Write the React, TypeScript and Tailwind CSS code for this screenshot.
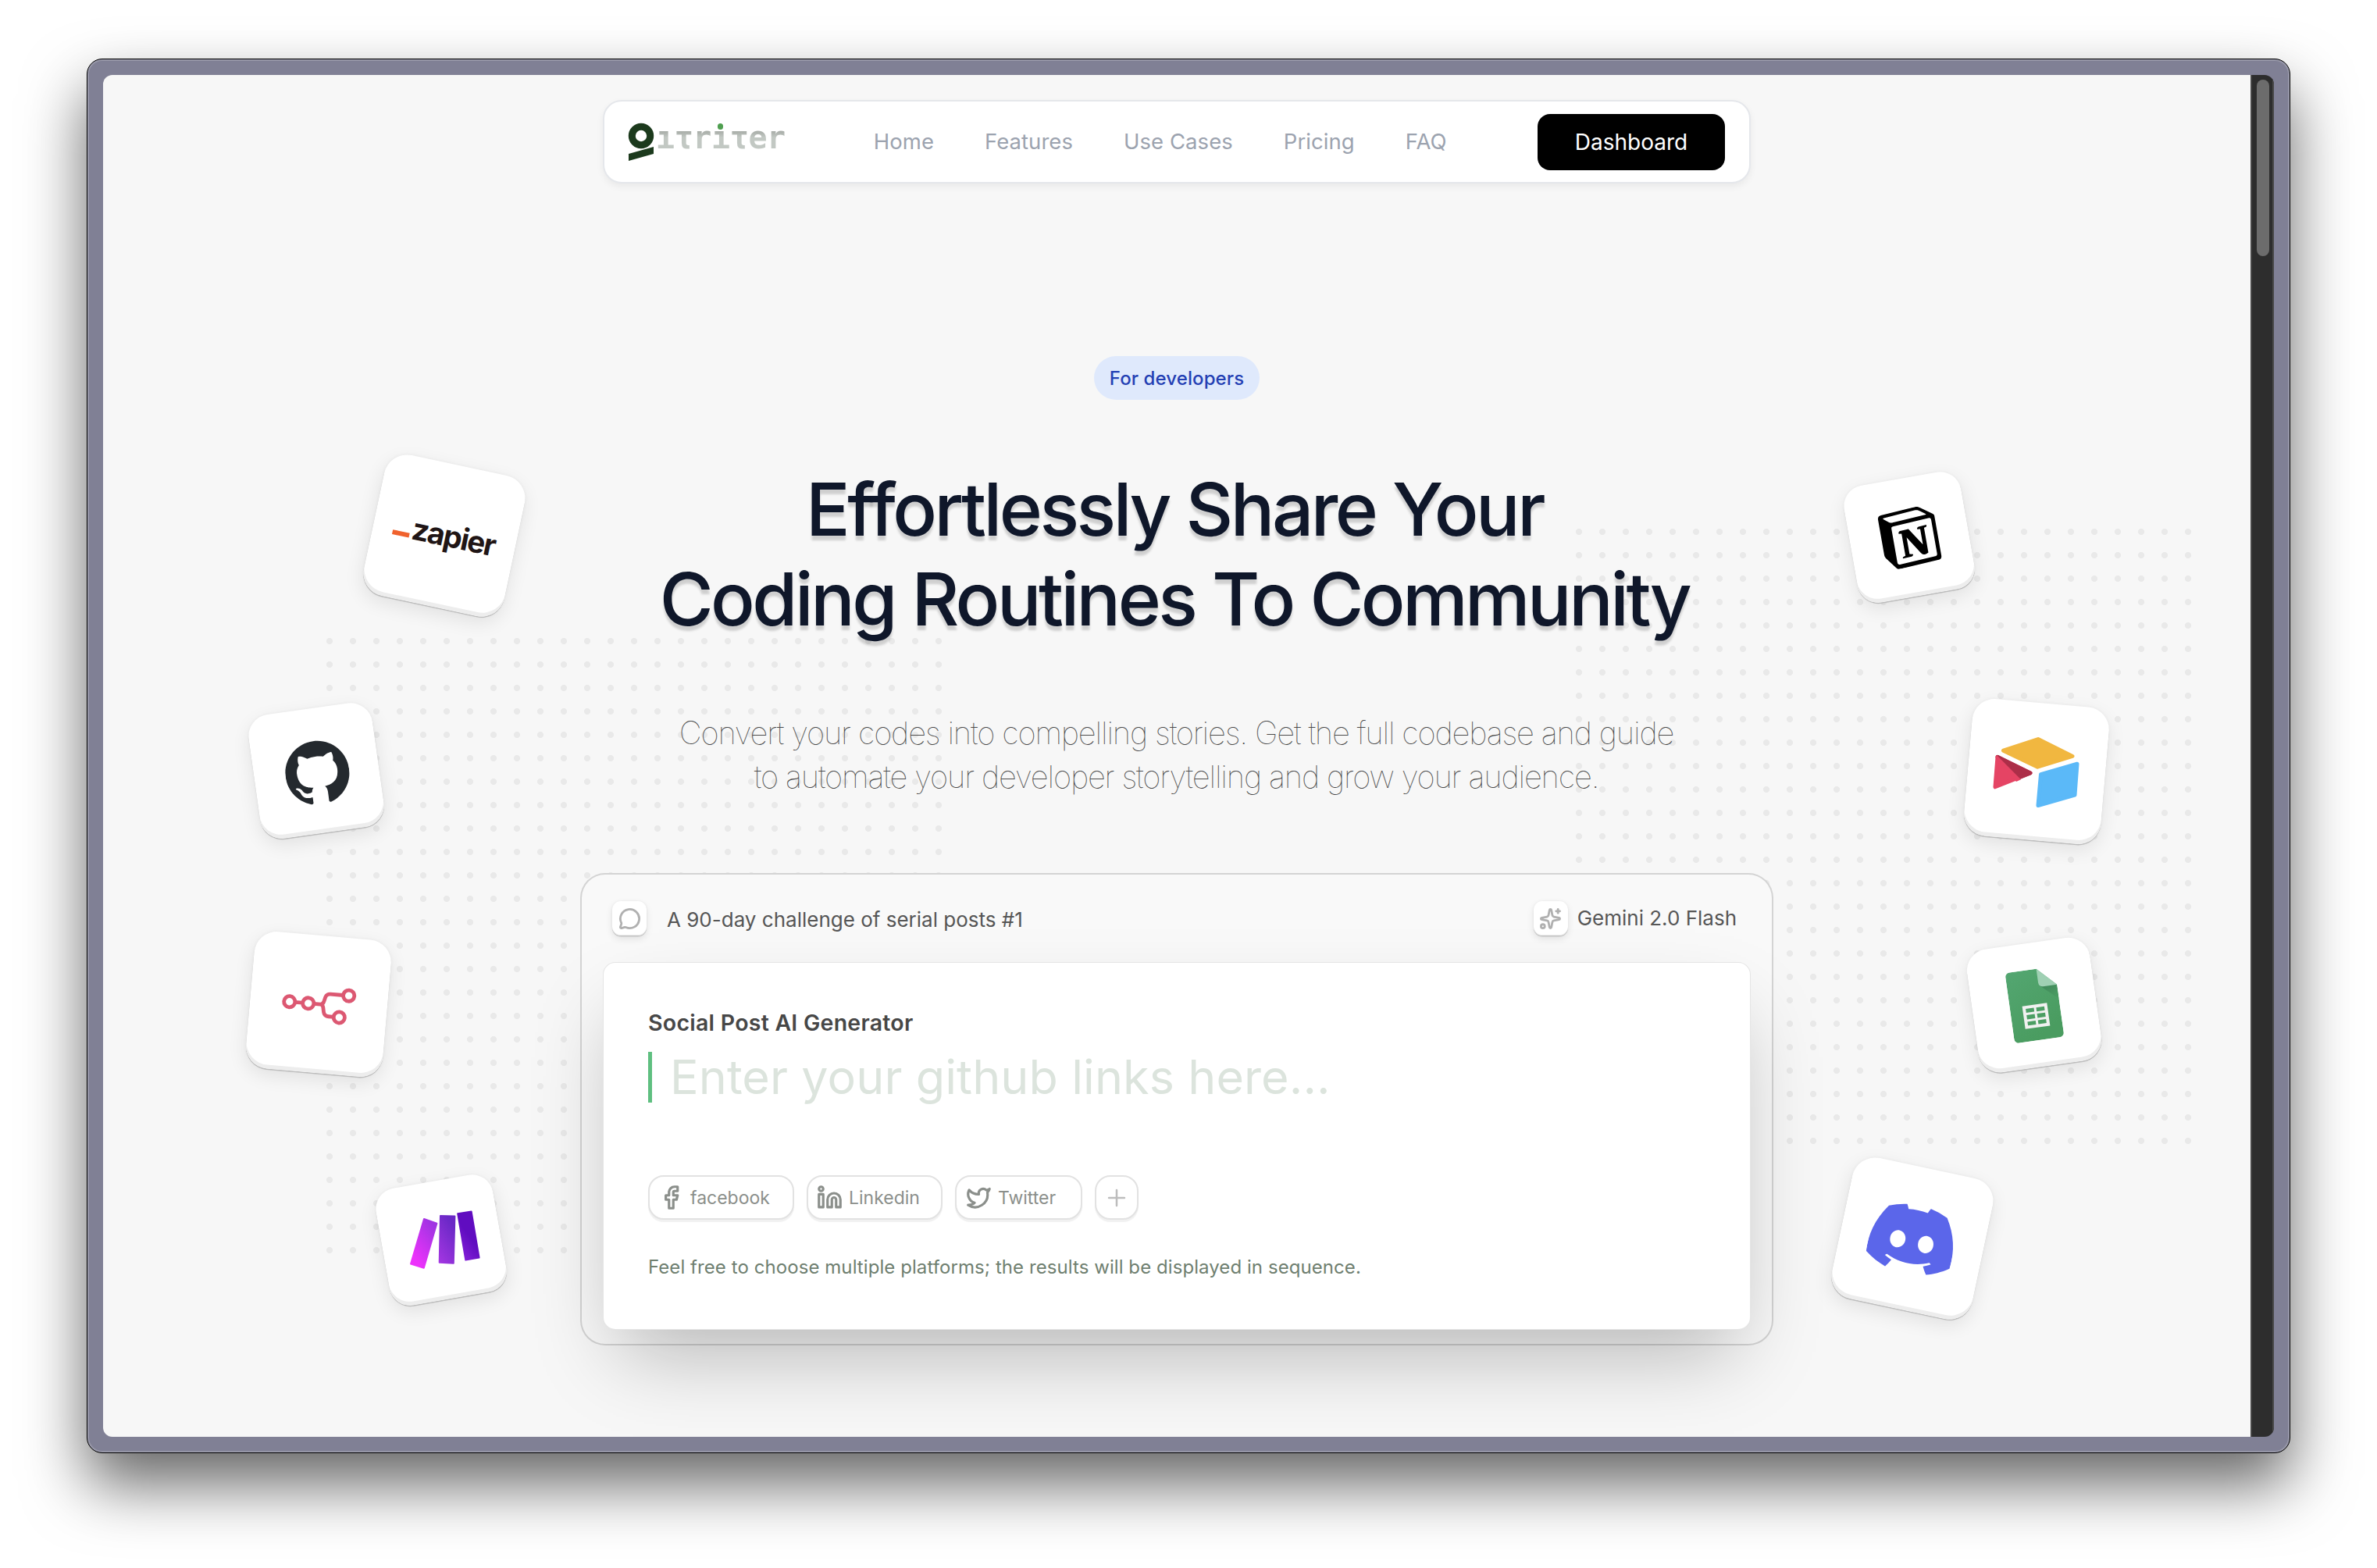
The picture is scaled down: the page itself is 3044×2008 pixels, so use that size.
import type { ReactNode } from "react";
import { Facebook, Linkedin, MessageCircle, Plus, Sparkles, Twitter } from "lucide-react";
import { SiDiscord, SiGithub, SiNotion } from "react-icons/si";

function Logo() {
  return (
    <div className="flex h-[50px] items-start">
      <svg width="34" height="50" viewBox="0 0 34 50" className="shrink-0">
        <circle cx="17" cy="17" r="11.7" fill="none" stroke="#1c3a1d" strokeWidth="9" />
        <path d="M1 40 L33 31 V40 L1 49 Z" fill="#1c3a1d" />
      </svg>
      <div className="relative ml-[2px] h-[50px]">
        <span className="block bg-linear-to-b from-[#a9aea9] from-30% to-[#c2c8c3] to-50% bg-clip-text font-['DejaVu_Sans_Mono'] text-[40px] leading-[38px] font-bold tracking-[-0.4px] text-transparent">
          ıτrıτer
        </span>
        <span className="absolute top-[1px] left-[79px] h-[8px] w-[7px] rounded-full bg-[#4f9f50]" />
      </div>
    </div>
  );
}

const links = ["Home", "Features", "Use Cases", "Pricing", "FAQ"];

function Nav() {
  return (
    <nav className="mt-8 flex h-[107px] w-[1470px] items-center rounded-[24px] border-2 border-[#e5e7eb] bg-white pr-[31px] pl-[30px] shadow-[0_4px_10px_rgba(0,0,0,0.06)]">
      <Logo />
      <div className="ml-[113px] flex flex-1 gap-[65px] pt-px text-[27.500px] tracking-[0.05px] text-[#9ca3af]">
        {links.map((l) => (
          <span key={l}>{l}</span>
        ))}
      </div>
      <button className="h-[72px] w-[240px] rounded-[16px] bg-black pt-px text-[28px] text-white">Dashboard</button>
    </nav>
  );
}

function Dots({ className }: { className: string }) {
  return (
    <div
      className={`absolute size-[810px] bg-[radial-gradient(circle_at_center,#e9e9e9_3.7px,transparent_4.4px)] bg-[length:30px_30px] ${className}`}
    />
  );
}

function Tile({ className, children }: { className: string; children: ReactNode }) {
  return (
    <div
      className={`absolute flex -translate-x-1/2 -translate-y-1/2 items-center justify-center bg-white shadow-[inset_0_-5px_0_#ededed,0_1.5px_0_#bcbcbc,0_0_4px_rgba(0,0,0,0.05),0_8px_24px_rgba(0,0,0,0.09)] ${className}`}
    >
      {children}
    </div>
  );
}

function N8nMark() {
  return (
    <svg width="100" height="50" viewBox="-50 -25 100 50" fill="none" stroke="#dc5872" strokeWidth="4.8">
      <circle cx="-37.4" cy="0" r="7.1" />
      <circle cx="-13.3" cy="0" r="7.1" />
      <circle cx="37.6" cy="-14.2" r="7.1" />
      <circle cx="27.7" cy="14.6" r="7.1" />
      <path d="M-30.5 0H-20.5M-6.5 0H2C10 0 4 -14.2 14 -14.2H30.5M2 0C10 0 3 14.6 14 14.6H20.5" />
    </svg>
  );
}

function MakeMark() {
  return (
    <svg width="120" height="100" viewBox="-60 -50 120 100" className="rotate-[10deg]">
      <defs>
        <linearGradient id="mk1" x1="0" y1="1" x2="0.7" y2="0">
          <stop offset="0.2" stopColor="#ec32fb" />
          <stop offset="1" stopColor="#9f34e2" />
        </linearGradient>
        <linearGradient id="mk2" x1="0" y1="1" x2="0.5" y2="0">
          <stop offset="0" stopColor="#a436e2" />
          <stop offset="1" stopColor="#6a28c6" />
        </linearGradient>
        <linearGradient id="mk3" x1="0" y1="1" x2="0.6" y2="0">
          <stop offset="0" stopColor="#8d24de" />
          <stop offset="0.6" stopColor="#600cc0" />
        </linearGradient>
      </defs>
      <g strokeWidth="2" strokeLinejoin="round">
        <path d="M-22 -27 L-5.6 -21.2 L-22.2 35.7 L-39 30.5 Z" fill="url(#mk1)" stroke="url(#mk1)" />
        <path d="M-1 -31 L17.4 -30.4 L15.8 29.7 L-2.3 28.8 Z" fill="url(#mk2)" stroke="url(#mk2)" />
        <path d="M21.2 -33.8 L38.6 -36.6 L48.6 22.6 L31.3 25.5 Z" fill="url(#mk3)" stroke="url(#mk3)" />
      </g>
    </svg>
  );
}

function AirtableMark() {
  return (
    <svg width="120" height="100" viewBox="-60 -50 120 100" className="-rotate-[5deg]" strokeLinejoin="round">
      <path d="M2 -41.5 L46 -19.6 L1.3 -5.8 L-42.5 -26.8 Z" fill="#f1b740" stroke="#f1b740" strokeWidth="5" />
      <path d="M5.5 3.6 L52 -9.8 L49 30 L2 43.5 Z" fill="#5bb9f8" stroke="#5bb9f8" strokeWidth="5" />
      <path d="M-50 -18.5 L-8 2 L-53 19.8 Z" fill="#e54464" stroke="#e54464" strokeWidth="5" />
      <path d="M-50 -18.8 L-8 2 L-21.6 7.4 Z" fill="#ac2e48" stroke="#ac2e48" strokeWidth="5" />
      <path d="M-52.5 -18 L-51 -21 L-20 10.2 L-26 13 Z" fill="#e54464" />
    </svg>
  );
}

function SheetsMark() {
  return (
    <svg width="64" height="91" viewBox="0 0 64 91">
      <defs>
        <linearGradient id="sh1" x1="0" y1="0" x2="0.4" y2="1">
          <stop offset="0" stopColor="#53a671" />
          <stop offset="1" stopColor="#4a9c60" />
        </linearGradient>
        <linearGradient id="sh2" x1="0" y1="0" x2="0.6" y2="1">
          <stop offset="0" stopColor="#3f8659" />
          <stop offset="1" stopColor="#4a9c62" />
        </linearGradient>
      </defs>
      <path d="M6 0H40.500L64 23.500V85a6 6 0 0 1-6 6H6a6 6 0 0 1-6-6V6a6 6 0 0 1 6-6Z" fill="url(#sh1)" />
      <path d="M42 22L64 42V23.500Z" fill="url(#sh2)" />
      <path d="M40.500 0L64 23.500H46a5.500 5.500 0 0 1-5.500-5.500Z" fill="#9fd0b3" />
      <path
        fillRule="evenodd"
        fill="#f1f1f1"
        d="M16 45H48V74.500H16ZM20 49V54H30.500V49ZM33.500 49V54H44V49ZM20 57V62.500H30.500V57ZM33.500 57V62.500H44V57ZM20 65.500V70.500H30.500V65.500ZM33.500 65.500V70.500H44V65.500Z"
      />
    </svg>
  );
}

function ZapierMark() {
  return (
    <div className="flex items-end gap-[2px] pb-[3px]">
      <span className="mb-[10px] h-[6px] w-[22px] bg-[#f0622d]" />
      <span className="text-[38.500px] leading-[46px] font-bold tracking-[-1.7px] text-[#201515]">zapier</span>
    </div>
  );
}

function MiniTile({ children }: { children: ReactNode }) {
  return (
    <span className="flex size-[44px] items-center justify-center rounded-[11px] bg-white text-[#b0b0b0] shadow-[inset_0_-1px_0_#ededed,0_1.5px_0_#c4c4c4,0_0_3px_rgba(0,0,0,0.06),0_4px_10px_rgba(0,0,0,0.1)]">
      {children}
    </span>
  );
}

function Chip({ icon, label, className }: { icon: ReactNode; label?: string; className: string }) {
  return (
    <span
      className={`flex h-[57px] items-center rounded-[20px] border-2 border-[#e2e2e2] bg-white text-[#8b8f8b] shadow-[0_3px_1px_#f1f1f1] ${className}`}
    >
      {icon}
      {label && <span className="ml-[8px] pt-px text-[23px]">{label}</span>}
    </span>
  );
}

function Generator() {
  return (
    <section className="relative mt-[95px] h-[605px] w-[1528px] rounded-[32px] border-2 border-black/15 bg-[#f9f9f9] px-[27px]">
      <header className="flex h-[112px] items-center justify-between px-3">
        <div className="flex items-center gap-[26px]">
          <MiniTile>
            <MessageCircle size={29} strokeWidth={2.3} />
          </MiniTile>
          <span className="pt-[2px] text-[26px] text-[#565656]">A 90-day challenge of serial posts #1</span>
        </div>
        <div className="flex items-center gap-3 pr-[6px]">
          <MiniTile>
            <Sparkles size={29} strokeWidth={2.3} />
          </MiniTile>
          <span className="pb-[2px] text-[26px] text-[#565656]">Gemini 2.0 Flash</span>
        </div>
      </header>
      <div className="h-[471px] rounded-[16px] border border-black/10 bg-white px-[57px] pt-[57px] shadow-[0_50px_100px_-22px_rgba(0,0,0,0.28)]">
        <h2 className="text-[28.500px] leading-[40px] font-semibold tracking-[0.25px] text-[#474747]">Social Post AI Generator</h2>
        <div className="mt-[17px] flex h-[65px] items-center">
          <span className="h-full w-[5px] bg-[#5fbf80]" />
          <span className="ml-[23px] text-[61px] leading-[65px] tracking-[0.1px] text-[#dce4dd]">
            Enter your github links here...
          </span>
        </div>
        <div className="mt-[93px] flex gap-4">
          <Chip className="w-[187px] pl-[11px]" icon={<Facebook size={33} strokeWidth={2.3} />} label="facebook" />
          <Chip className="w-[174px] pl-[11px]" icon={<Linkedin size={33} strokeWidth={2.3} />} label="Linkedin" />
          <Chip className="w-[163px] pl-[12px]" icon={<Twitter size={33} strokeWidth={2.3} />} label="Twitter" />
          <Chip className="w-[56px] justify-center" icon={<Plus size={34} strokeWidth={1.8} className="shrink-0 text-[#bdbdbd]" />} />
        </div>
        <p className="mt-[43px] text-[24px] leading-[36px] tracking-[0.07px] text-[#6f7f70]">
          Feel free to choose multiple platforms; the results will be displayed in sequence.
        </p>
      </div>
    </section>
  );
}

export default function App() {
  return (
    <div className="h-[2008px] w-[3044px] overflow-hidden bg-white pt-[75px] pl-[111px] font-[Inter,sans-serif]">
      <div className="h-[1786px] w-[2822px] rounded-[20px] border border-black bg-[#808095] p-[20px] shadow-[inset_0_0_0_2px_rgba(255,255,255,0.18),0_40px_80px_rgba(0,0,0,0.6)]">
        <div className="flex h-full overflow-hidden rounded-[12px]">
          <main className="relative flex w-[2750px] flex-col items-center overflow-hidden bg-[#f7f7f7]">
            <Dots className="top-[710px] left-[275px]" />
            <Dots className="top-[570px] left-[1875px]" />
            <Nav />
            <span className="mt-[221px] flex h-[56px] w-[212px] shrink-0 items-center justify-center rounded-full bg-[#dfe9fc] pt-px text-[24px] font-medium tracking-[0.1px] text-[#2440b4]">
              For developers
            </span>
            <h1 className="relative mt-[83px] pr-[6px] text-center text-[94px] leading-[115px] font-medium tracking-[-3.5px] text-[#0f172a] [text-shadow:0_6px_3px_rgba(0,0,0,0.16)]">
              Effortlessly Share Your
              <br />
              Coding Routines To Community
            </h1>
            <p className="relative mt-[86px] pr-px text-center text-[40px] leading-[56px] font-thin tracking-[-1.2px] text-[#4a4a4a]">
              Convert your codes into compelling stories. Get the full codebase and guide
              <br />
              to automate your developer storytelling and grow your audience.
            </p>
            <Generator />
            <Tile className="top-[590px] left-[437px] size-[184px] rotate-[12deg] rounded-[30px]">
              <ZapierMark />
            </Tile>
            <Tile className="top-[891px] left-[273px] size-[160px] -rotate-[8deg] rounded-[28px]">
              <SiGithub size={82} color="#24292e" className="mt-[3px] ml-px" />
            </Tile>
            <Tile className="top-[1190px] left-[276px] size-[176px] rotate-[5deg] rounded-[29px]">
              <N8nMark />
            </Tile>
            <Tile className="top-[1492px] left-[433px] size-[152px] -rotate-[10deg] rounded-[27px]">
              <MakeMark />
            </Tile>
            <Tile className="top-[592px] left-[2313px] size-[152px] -rotate-[10deg] rounded-[27px]">
              <SiNotion size={75} color="#000" />
            </Tile>
            <Tile className="top-[892px] left-[2476px] size-[176px] rotate-[5deg] rounded-[29px]">
              <AirtableMark />
            </Tile>
            <Tile className="top-[1191px] left-[2473px] size-[159px] -rotate-[8deg] rounded-[28px]">
              <SheetsMark />
            </Tile>
            <Tile className="top-[1490px] left-[2317px] size-[184px] rotate-[12deg] rounded-[30px]">
              <SiDiscord size={110} color="#5b66ea" />
            </Tile>
          </main>
          <div className="w-[30px] border-x-2 border-[#474747] bg-[#2d2d2d] pt-[6px] pl-[6px]">
            <div className="h-[226px] w-[16px] rounded-full bg-[#6c6c6c]" />
          </div>
        </div>
      </div>
    </div>
  );
}
